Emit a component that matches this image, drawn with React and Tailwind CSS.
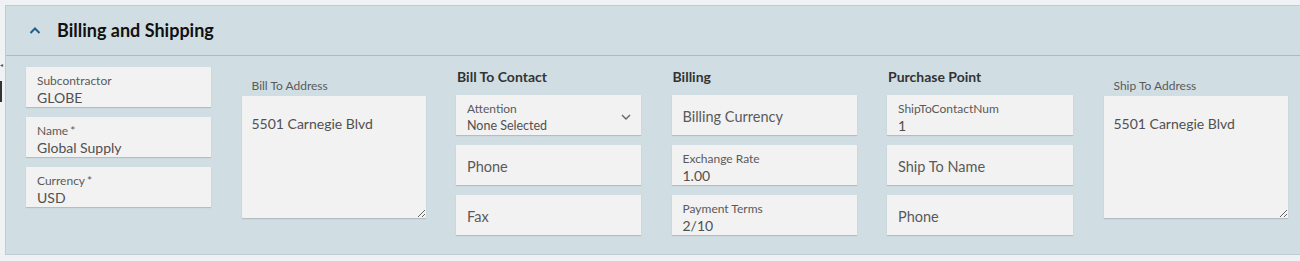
import React from 'react'

const font = { fontFamily: '"Source Sans Pro", Lato, "Noto Sans", sans-serif' }

function Field({ label, value, req, small }) {
  return (
    <div className="h-10 bg-[#f2f2f2] shadow-[0_1px_1px_rgba(0,0,0,0.14)] px-[11px] pt-[6px]">
      <div className="text-[12px] leading-[16px] text-[#5a5a5a]">
        {label}
        {req && <span className="ml-[2px]">*</span>}
      </div>
      <div className={(small ? 'text-[12.5px]' : 'text-[14px]') + ' leading-[18px] text-[#505050]'}>{value}</div>
    </div>
  )
}

function Empty({ label }) {
  return (
    <div className="h-10 bg-[#f2f2f2] shadow-[0_1px_1px_rgba(0,0,0,0.14)] px-[11px] pt-[3px] flex items-center text-[14.5px] text-[#5a5a5a]">
      {label}
    </div>
  )
}

function Heading({ children }) {
  return <div className="text-[14px] font-bold leading-5 text-[#333] h-7 pl-[1px]">{children}</div>
}

function Address({ label }) {
  return (
    <div className="pt-[11px]">
      <div className="text-[12px] leading-4 text-[#5a5a5a] pl-[10px] mb-[2px]">{label}</div>
      <textarea
        readOnly
        defaultValue="5501 Carnegie Blvd"
        className="block w-full h-[122px] bg-[#f2f2f2] shadow-[0_1px_1px_rgba(0,0,0,0.14)] outline-none text-[14px] leading-5 text-[#505050] pl-[10px] pt-[18px] resize-y"
        style={font}
      />
    </div>
  )
}

export default function App() {
  return (
    <div className="w-[1300px] h-[261px] bg-[#eef2f5] flex pt-[5px] overflow-hidden" style={font}>
      <div className="w-[5px] shrink-0 relative">
        <div className="absolute left-0 top-[57px] text-[6px] text-[#555] leading-none">◂</div>
        <div className="absolute left-0 top-[76px] w-[2px] h-[21px] bg-[#333]" />
      </div>
      <div className="flex-1 h-[250px] bg-[#d0dee3] border-t border-l border-b border-[#bfccd2]">
        <div className="h-[50px] flex items-center border-b border-[#9fc0ca] pl-[22px]">
          <svg width="14" height="9" viewBox="0 0 14 9" className="mr-[15px]">
            <polyline points="2.5,7 7,2.5 11.5,7" fill="none" stroke="#1f5f8b" strokeWidth="2" />
          </svg>
          <span className="text-[18px] font-bold text-[#111]">Billing and Shipping</span>
        </div>
        <div className="grid grid-cols-[185px_184px_185px_185px_186px_184px] gap-x-[30.5px] pl-[20px] pt-[11px]">
          <div className="flex flex-col gap-[10px]">
            <Field label="Subcontractor" value="GLOBE" />
            <Field label="Name" req value="Global Supply" />
            <Field label="Currency" req value="USD" />
          </div>
          <Address label="Bill To Address" />
          <div>
            <Heading>Bill To Contact</Heading>
            <div className="flex flex-col gap-[10px]">
              <div className="h-10 bg-[#f2f2f2] shadow-[0_1px_1px_rgba(0,0,0,0.14)] pl-[11px] pr-[10px] pt-[6px] flex justify-between">
                <div>
                  <div className="text-[12px] leading-[16px] text-[#5a5a5a]">Attention</div>
                  <div className="text-[12.5px] leading-[18px] text-[#505050]">None Selected</div>
                </div>
                <svg width="10" height="6" viewBox="0 0 10 6" className="mt-[13px]">
                  <polyline points="1,1 5,5 9,1" fill="none" stroke="#666" strokeWidth="1.4" />
                </svg>
              </div>
              <Empty label="Phone" />
              <Empty label="Fax" />
            </div>
          </div>
          <div>
            <Heading>Billing</Heading>
            <div className="flex flex-col gap-[10px]">
              <Empty label="Billing Currency" />
              <Field label="Exchange Rate" value="1.00" />
              <Field label="Payment Terms" value="2/10" />
            </div>
          </div>
          <div>
            <Heading>Purchase Point</Heading>
            <div className="flex flex-col gap-[10px]">
              <Field label="ShipToContactNum" value="1" />
              <Empty label="Ship To Name" />
              <Empty label="Phone" />
            </div>
          </div>
          <Address label="Ship To Address" />
        </div>
      </div>
    </div>
  )
}
